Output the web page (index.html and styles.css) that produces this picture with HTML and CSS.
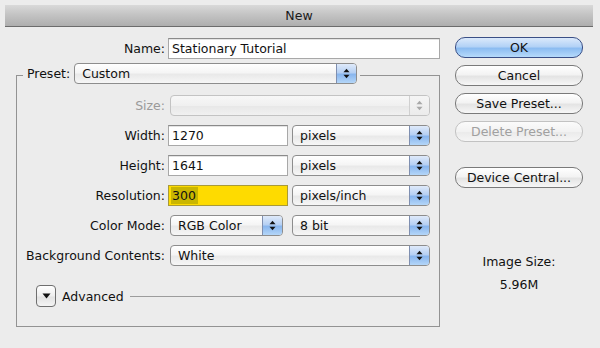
FILE: index.html
```html
<!DOCTYPE html>
<html>
<head>
<meta charset="utf-8">
<title>New</title>
<link rel="stylesheet" href="styles.css">
</head>
<body>
<div class="window">
  <div class="titlebar">New</div>
  <div class="dialog">
    <div class="main">
      <div class="name-row">
        <span class="label">Name:</span>
        <div class="field wide">Stationary Tutorial</div>
      </div>
      <fieldset class="group">
        <legend class="legend">
          <span class="legend-label">Preset:</span>
          <div class="popup preset"><span class="popup-text">Custom</span><span class="stepper"><svg width="7" height="11" viewBox="0 0 7 11"><polygon points="0.5,4.2 3.5,0.8 6.5,4.2"/><polygon points="0.5,6.8 6.5,6.8 3.5,10.2"/></svg></span></div>
        </legend>

        <div class="row first">
          <span class="label disabled">Size:</span>
          <div class="popup full disabled-popup"><span class="popup-text"></span><span class="stepper"><svg width="7" height="11" viewBox="0 0 7 11"><polygon points="0.5,4.2 3.5,0.8 6.5,4.2"/><polygon points="0.5,6.8 6.5,6.8 3.5,10.2"/></svg></span></div>
        </div>

        <div class="row">
          <span class="label">Width:</span>
          <div class="field num">1270</div>
          <div class="popup unit"><span class="popup-text">pixels</span><span class="stepper"><svg width="7" height="11" viewBox="0 0 7 11"><polygon points="0.5,4.2 3.5,0.8 6.5,4.2"/><polygon points="0.5,6.8 6.5,6.8 3.5,10.2"/></svg></span></div>
        </div>

        <div class="row">
          <span class="label">Height:</span>
          <div class="field num">1641</div>
          <div class="popup unit"><span class="popup-text">pixels</span><span class="stepper"><svg width="7" height="11" viewBox="0 0 7 11"><polygon points="0.5,4.2 3.5,0.8 6.5,4.2"/><polygon points="0.5,6.8 6.5,6.8 3.5,10.2"/></svg></span></div>
        </div>

        <div class="row">
          <span class="label">Resolution:</span>
          <div class="field num highlight"><span class="selected">300</span></div>
          <div class="popup unit"><span class="popup-text">pixels/inch</span><span class="stepper"><svg width="7" height="11" viewBox="0 0 7 11"><polygon points="0.5,4.2 3.5,0.8 6.5,4.2"/><polygon points="0.5,6.8 6.5,6.8 3.5,10.2"/></svg></span></div>
        </div>

        <div class="row">
          <span class="label">Color Mode:</span>
          <div class="popup mode"><span class="popup-text">RGB Color</span><span class="stepper"><svg width="7" height="11" viewBox="0 0 7 11"><polygon points="0.5,4.2 3.5,0.8 6.5,4.2"/><polygon points="0.5,6.8 6.5,6.8 3.5,10.2"/></svg></span></div>
          <div class="popup unit"><span class="popup-text">8 bit</span><span class="stepper"><svg width="7" height="11" viewBox="0 0 7 11"><polygon points="0.5,4.2 3.5,0.8 6.5,4.2"/><polygon points="0.5,6.8 6.5,6.8 3.5,10.2"/></svg></span></div>
        </div>

        <div class="row">
          <span class="label">Background Contents:</span>
          <div class="popup full"><span class="popup-text">White</span><span class="stepper"><svg width="7" height="11" viewBox="0 0 7 11"><polygon points="0.5,4.2 3.5,0.8 6.5,4.2"/><polygon points="0.5,6.8 6.5,6.8 3.5,10.2"/></svg></span></div>
        </div>

        <div class="advanced">
          <span class="disclosure"><svg width="9" height="6" viewBox="0 0 9 6"><polygon points="0.5,0.5 8.5,0.5 4.5,5.5"/></svg></span>
          <span class="adv-text">Advanced</span>
          <span class="adv-line"></span>
        </div>
      </fieldset>
    </div>

    <div class="side">
      <div class="btn default">OK</div>
      <div class="btn">Cancel</div>
      <div class="btn">Save Preset...</div>
      <div class="btn off">Delete Preset...</div>
      <div class="btn device">Device Central...</div>
      <div class="size-label">Image Size:</div>
      <div class="size-value">5.96M</div>
    </div>
  </div>
</div>
</body>
</html>
```

FILE: styles.css
```css
html, body {
  margin: 0;
  padding: 0;
}

body {
  background: #ececec;
  font-family: "DejaVu Sans", "Liberation Sans", sans-serif;
  font-size: 12.5px;
  color: #111;
  width: 600px;
  height: 348px;
  overflow: hidden;
}

.titlebar {
  margin: 5px 7px 0 5px;
  height: 21px;
  line-height: 21px;
  text-align: center;
  font-size: 12.5px;
  color: #1a1a1a;
  background: linear-gradient(#d9d9d9, #c4c4c4 45%, #aeaeae);
  border-bottom: 1px solid #6c6c6c;
}

.dialog {
  display: flex;
  padding-top: 11px;
}

.main {
  width: 424px;
  padding-left: 16px;
}

.name-row {
  display: grid;
  grid-template-columns: 149px 272px;
  column-gap: 3px;
  align-items: center;
  height: 21px;
}

.label {
  text-align: right;
  white-space: nowrap;
}

.label.disabled {
  color: #9a9a9a;
}

.field {
  box-sizing: border-box;
  height: 21px;
  line-height: 19px;
  padding-left: 3px;
  background: #fff;
  border: 1px solid #a8a8a8;
  border-top-color: #8a8a8a;
  box-shadow: inset 0 1px 0 #e4e4e4;
  white-space: nowrap;
}

.field.wide {
  width: 272px;
}

.field.num {
  width: 120px;
}

.field.highlight {
  background: #fedb00;
  box-shadow: none;
  border-color: #a89a3a;
}

.selected {
  background: #cab600;
  display: inline-block;
  height: 17px;
  line-height: 17px;
  padding-right: 2px;
  margin-left: -1px;
  padding-left: 1px;
}

.group {
  margin: 4px 0 0 0;
  padding: 0 0 19px 0;
  min-width: 0;
  border: 1px solid #939393;
  width: 422px;
}

.legend {
  display: flex;
  align-items: center;
  margin-left: 6px;
  padding: 0 3px 3px 4px;
}

.legend-label {
  margin-right: 4px;
}

.row {
  display: flex;
  align-items: center;
  height: 21px;
  margin-top: 9px;
}

.row.first {
  margin-top: 8px;
}

.row .label {
  width: 148px;
  flex: none;
  margin-right: 3px;
}

.row .popup {
  margin-left: 2px;
}

.row .field + .popup.unit {
  margin-left: 4px;
}

.row .popup.mode + .popup.unit {
  margin-left: 9px;
}

.popup {
  box-sizing: border-box;
  display: flex;
  height: 21px;
  border: 1px solid #8d8d8d;
  border-radius: 4px;
  background: linear-gradient(#ffffff, #f5f5f5 45%, #e9e9e9 55%, #f6f6f6);
  overflow: hidden;
  flex: none;
}

.popup.preset {
  width: 283px;
}

.popup.full {
  width: 260px;
}

.popup.unit {
  width: 138px;
}

.popup.mode {
  width: 113px;
}

.popup-text {
  flex: 1;
  padding-left: 7px;
  line-height: 19px;
  white-space: nowrap;
}

.stepper {
  width: 19px;
  flex: none;
  display: flex;
  align-items: center;
  justify-content: center;
  border-left: 1px solid #7f8fb0;
  background: linear-gradient(#dfeafa, #b6d0f3 45%, #89b6ee 55%, #b4d6f8);
}

.stepper svg {
  fill: #111;
}

.disabled-popup {
  border-color: #c3c3c3;
  background: linear-gradient(#f7f7f7, #f0f0f0 50%, #e8e8e8 55%, #f1f1f1);
}

.disabled-popup .stepper {
  border-left-color: #d0d0d0;
  background: linear-gradient(#f5f5f5, #ebebeb);
}

.disabled-popup .stepper svg {
  fill: #a8a8a8;
}

.advanced {
  display: flex;
  align-items: center;
  margin: 19px 19px 0 19px;
  height: 22px;
}

.disclosure {
  box-sizing: border-box;
  width: 20px;
  height: 22px;
  border: 1px solid #6f6f6f;
  border-radius: 4px;
  background: linear-gradient(#ffffff, #eeeeee 50%, #e2e2e2 55%, #f4f4f4);
  display: flex;
  align-items: center;
  justify-content: center;
  flex: none;
}

.disclosure svg {
  fill: #111;
}

.adv-text {
  margin-left: 6px;
}

.adv-line {
  flex: 1;
  height: 1px;
  background: #9c9c9c;
  margin-left: 6px;
}

.side {
  display: flex;
  flex-direction: column;
  margin-left: 15px;
  margin-top: -1px;
  width: 128px;
}

.btn {
  box-sizing: border-box;
  height: 21px;
  line-height: 19px;
  margin-bottom: 7px;
  text-align: center;
  border: 1px solid #7a7a7a;
  border-radius: 10px;
  background: linear-gradient(#ffffff, #f3f3f3 45%, #e4e4e4 55%, #f7f7f7);
  color: #111;
  white-space: nowrap;
}

.btn.default {
  border-color: #3a4f86;
  background: linear-gradient(#dbe9fb, #b3d2f6 45%, #8cbcf1 55%, #b6dafb);
}

.btn.off {
  border-color: #c2c2c2;
  color: #a0a0a0;
  background: linear-gradient(#fbfbfb, #f2f2f2 50%, #ebebeb 55%, #f5f5f5);
}

.btn.device {
  margin-top: 18px;
}

.size-label {
  margin-top: 59px;
  text-align: center;
  line-height: 15px;
}

.size-value {
  margin-top: 8px;
  text-align: center;
  line-height: 15px;
}
```
